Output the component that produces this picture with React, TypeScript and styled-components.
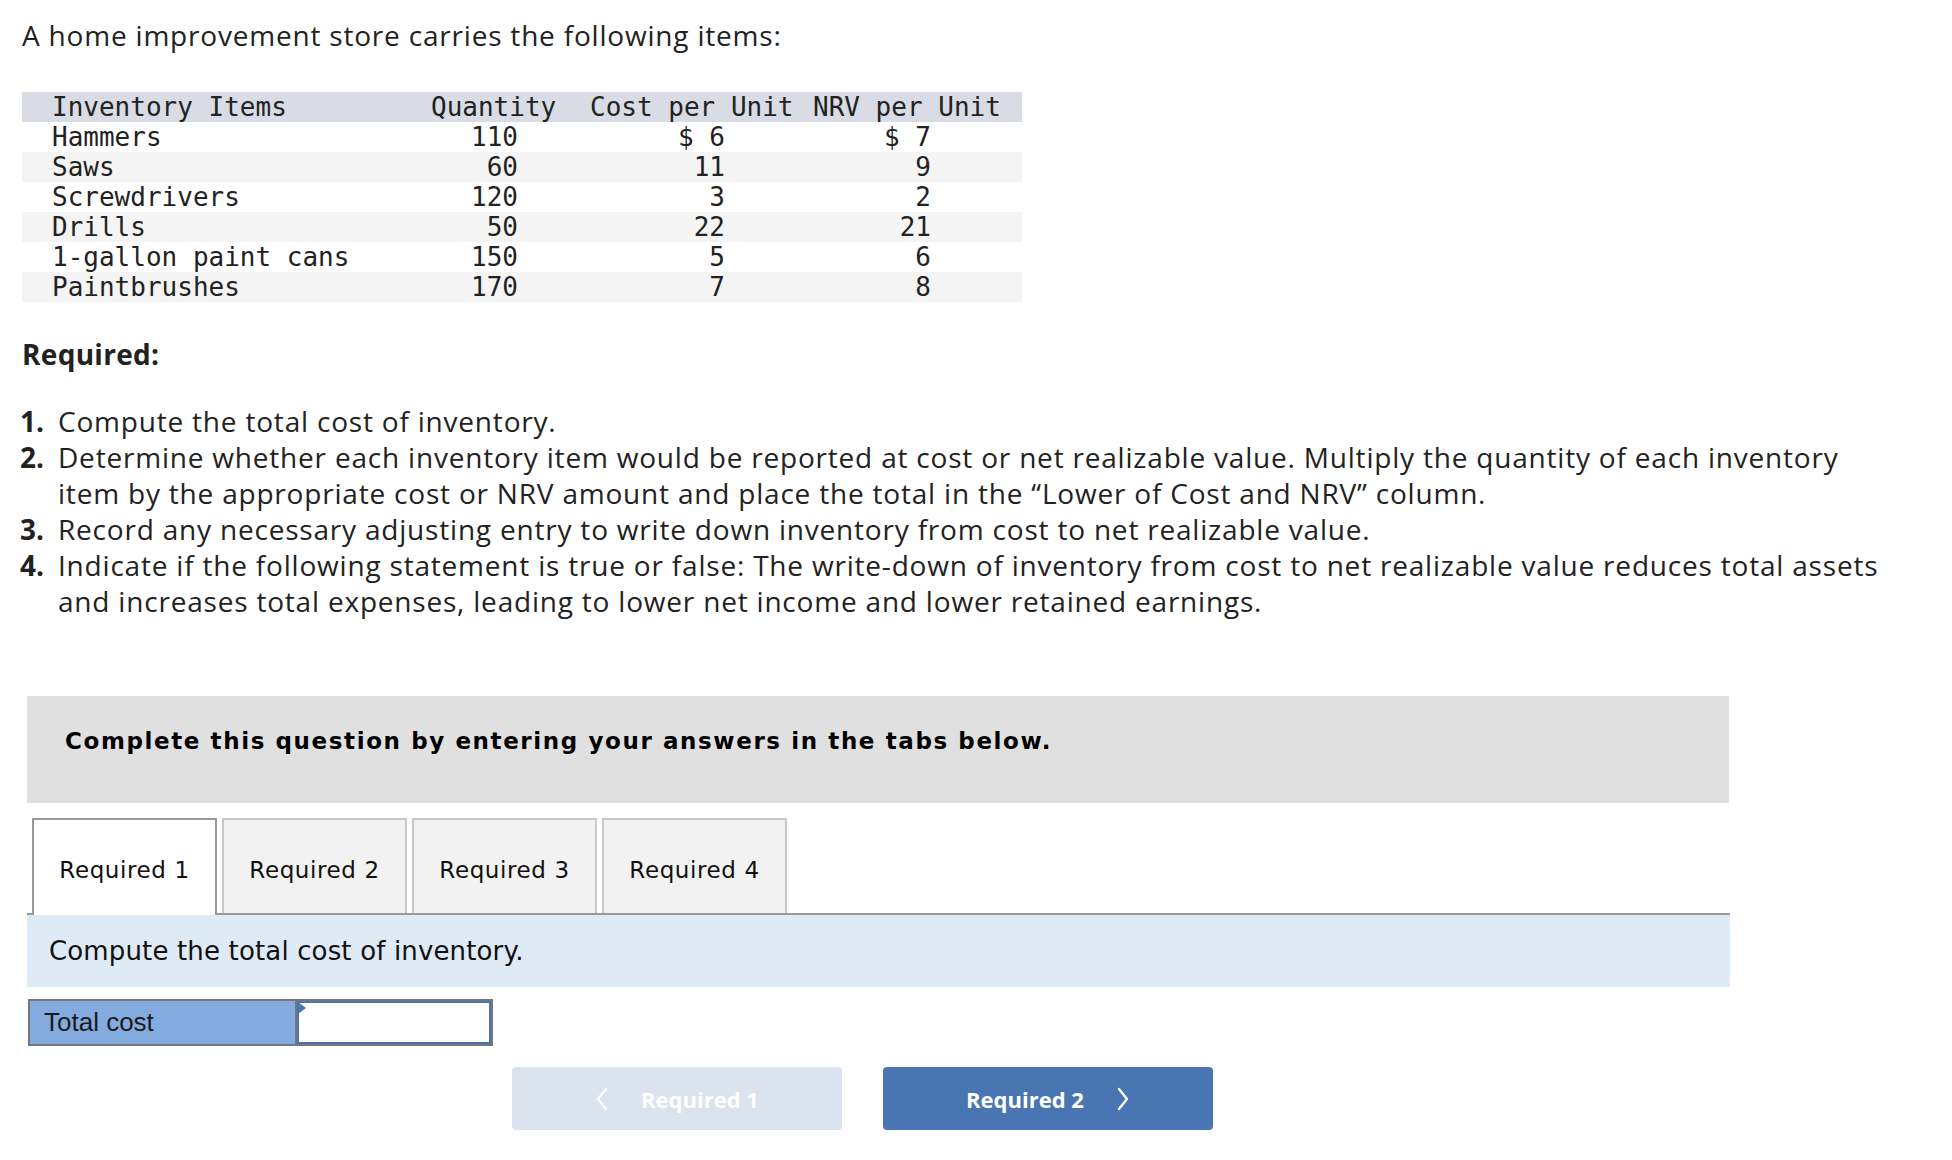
import React from 'react';
import styled, { createGlobalStyle } from 'styled-components';

const GlobalStyle = createGlobalStyle`
  body {
    margin: 0;
    background: #ffffff;
    color: #222222;
    font-family: "Open Sans", Lato, sans-serif;
  }
`;

const Page = styled.div`
  width: 1952px;
  box-sizing: border-box;
  padding: 17px 22px 30px;
`;

const Intro = styled.p`
  margin: 0;
  font-size: 28px;
  letter-spacing: 0.8px;
  line-height: 36px;
`;

const Table = styled.div`
  margin-top: 39px;
  width: 1000px;
  font-family: "DejaVu Sans Mono", monospace;
  font-size: 26px;
  color: #222;
`;

const Row = styled.div<{ $bg: string }>`
  display: grid;
  grid-template-columns: 409px 159px 223px 209px;
  height: 30px;
  line-height: 30px;
  background: ${p => p.$bg};
  white-space: pre;
`;

const NameCell = styled.div`
  padding-left: 30px;
`;

const HeadCell = styled.div``;

const NumCell = styled.div<{ $pr: number }>`
  text-align: right;
  padding-right: ${p => p.$pr}px;
`;

const Heading = styled.div`
  margin-top: 34px;
  font-size: 28px;
  letter-spacing: 0.3px;
  line-height: 36px;
  font-weight: 700;
`;

const List = styled.ol`
  list-style: none;
  margin: 31px 0 0 -14px;
  padding: 0;
  width: 1882px;
`;

const Item = styled.li`
  display: grid;
  grid-template-columns: 36px 1fr;
  column-gap: 14px;
  font-size: 28px;
  letter-spacing: 0.8px;
  line-height: 36px;
`;

const Marker = styled.span`
  text-align: right;
  font-weight: 700;
  letter-spacing: 0;
`;

const Notice = styled.div`
  margin: 77px 0 0 5px;
  width: 1702px;
  height: 107px;
  box-sizing: border-box;
  padding: 32px 0 0 38px;
  background: #e0e0e0;
  font-family: "DejaVu Sans", Verdana, sans-serif;
  font-size: 23px;
  letter-spacing: 1.6px;
  line-height: 26px;
  font-weight: 700;
  color: #000;
`;

const TabBar = styled.div`
  margin: 15px 0 0 5px;
  width: 1703px;
  display: flex;
  align-items: flex-end;
  gap: 5px;
  padding-left: 5px;
  box-sizing: border-box;
  border-bottom: 2px solid #999999;
`;

const Tab = styled.div<{ $active?: boolean }>`
  width: 185px;
  height: ${p => (p.$active ? 97 : 95)}px;
  margin-bottom: ${p => (p.$active ? -2 : 0)}px;
  box-sizing: border-box;
  display: flex;
  align-items: center;
  justify-content: center;
  padding-top: ${p => (p.$active ? 4 : 6)}px;
  border: 2px solid ${p => (p.$active ? '#999999' : '#c8c8c8')};
  border-bottom: none;
  background: ${p => (p.$active ? '#ffffff' : '#f2f2f2')};
  font-family: "DejaVu Sans", Verdana, sans-serif;
  font-size: 23px;
  letter-spacing: 0.6px;
  color: #111;
  position: relative;
`;

const Band = styled.div`
  margin-left: 5px;
  width: 1703px;
  height: 72px;
  box-sizing: border-box;
  display: flex;
  align-items: center;
  padding-left: 22px;
  background: #dfeaf7;
  font-family: "DejaVu Sans", Verdana, sans-serif;
  font-size: 26px;
  letter-spacing: 0.15px;
  color: #111;
`;

const AnswerRow = styled.div`
  margin: 12px 0 0 6px;
  width: 465px;
  height: 47px;
  box-sizing: border-box;
  display: grid;
  grid-template-columns: 265px 1fr;
  border: 2px solid #777777;
  background: #777777;
  gap: 2px;
`;

const Label = styled.div`
  background: #83abdf;
  display: flex;
  align-items: center;
  padding-left: 14px;
  font-family: "Liberation Sans", Arial, sans-serif;
  font-size: 26px;
  color: #1a1a1a;
`;

const InputCell = styled.div`
  position: relative;
  background: #ffffff;
  border: 2px solid #4a74b4;
`;

const Flag = styled.span`
  position: absolute;
  left: -1px;
  top: -1px;
  width: 0;
  height: 0;
  border-top: 6px solid transparent;
  border-bottom: 6px solid transparent;
  border-left: 8px solid #4a74b4;
`;

const Nav = styled.div`
  margin: 21px 0 0 490px;
  display: flex;
  gap: 41px;
`;

const NavButton = styled.div<{ $primary?: boolean }>`
  width: 330px;
  height: 63px;
  border-radius: 4px;
  display: flex;
  align-items: center;
  justify-content: center;
  gap: 32px;
  background: ${p => (p.$primary ? '#4a75b3' : '#dae3ee')};
  color: #ffffff;
  font-family: "Open Sans", sans-serif;
  font-size: 22px;
  font-weight: 700;
`;

const Chevron = ({ dir }: { dir: 'left' | 'right' }) => (
  <svg width="14" height="24" viewBox="0 0 14 24" fill="none">
    <polyline
      points={dir === 'left' ? '11,2 3,12 11,22' : '3,2 11,12 3,22'}
      stroke="#ffffff"
      strokeWidth="2.4"
      strokeLinecap="round"
      strokeLinejoin="round"
    />
  </svg>
);

const items = [
  { name: 'Hammers', qty: '110', cost: '$ 6', nrv: '$ 7' },
  { name: 'Saws', qty: '60', cost: '11', nrv: '9' },
  { name: 'Screwdrivers', qty: '120', cost: '3', nrv: '2' },
  { name: 'Drills', qty: '50', cost: '22', nrv: '21' },
  { name: '1-gallon paint cans', qty: '150', cost: '5', nrv: '6' },
  { name: 'Paintbrushes', qty: '170', cost: '7', nrv: '8' },
];

const steps = [
  'Compute the total cost of inventory.',
  'Determine whether each inventory item would be reported at cost or net realizable value. Multiply the quantity of each inventory item by the appropriate cost or NRV amount and place the total in the \u201cLower of Cost and NRV\u201d column.',
  'Record any necessary adjusting entry to write down inventory from cost to net realizable value.',
  'Indicate if the following statement is true or false: The write-down of inventory from cost to net realizable value reduces total assets and increases total expenses, leading to lower net income and lower retained earnings.',
];

const App = () => {
  return (
    <Page>
      <GlobalStyle />
      <Intro>A home improvement store carries the following items:</Intro>

      <Table>
        <Row $bg="#d9dce4">
          <NameCell>Inventory Items</NameCell>
          <HeadCell>Quantity</HeadCell>
          <HeadCell>Cost per Unit</HeadCell>
          <HeadCell>NRV per Unit</HeadCell>
        </Row>
        {items.map((it, i) => (
          <Row key={it.name} $bg={i % 2 === 1 ? '#f4f4f4' : '#ffffff'}>
            <NameCell>{it.name}</NameCell>
            <NumCell $pr={72}>{it.qty}</NumCell>
            <NumCell $pr={88}>{it.cost}</NumCell>
            <NumCell $pr={91}>{it.nrv}</NumCell>
          </Row>
        ))}
      </Table>

      <Heading>Required:</Heading>
      <List>
        {steps.map((s, i) => (
          <Item key={i}>
            <Marker>{i + 1}.</Marker>
            <span>{s}</span>
          </Item>
        ))}
      </List>

      <Notice>Complete this question by entering your answers in the tabs below.</Notice>

      <TabBar>
        <Tab $active>Required 1</Tab>
        <Tab>Required 2</Tab>
        <Tab>Required 3</Tab>
        <Tab>Required 4</Tab>
      </TabBar>
      <Band>Compute the total cost of inventory.</Band>

      <AnswerRow>
        <Label>Total cost</Label>
        <InputCell>
          <Flag />
        </InputCell>
      </AnswerRow>

      <Nav>
        <NavButton>
          <Chevron dir="left" />
          <span>Required 1</span>
        </NavButton>
        <NavButton $primary>
          <span>Required 2</span>
          <Chevron dir="right" />
        </NavButton>
      </Nav>
    </Page>
  );
};

export default App;
